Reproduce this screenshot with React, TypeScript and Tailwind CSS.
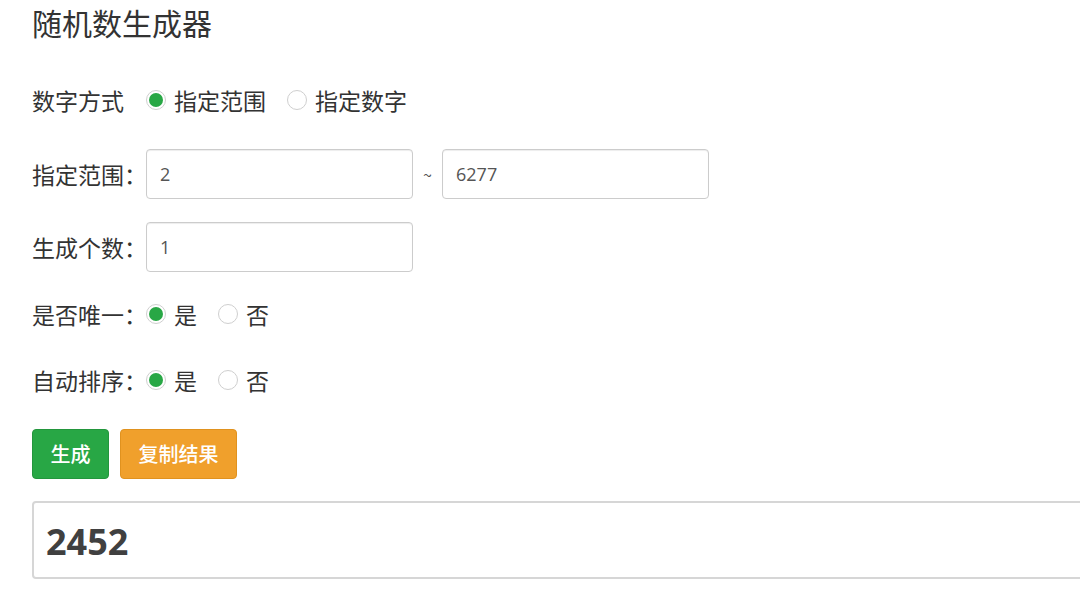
import React, { useState } from "react";

const font = { fontFamily: '"Noto Sans CJK SC", "Noto Sans", sans-serif' };

function Radio({ checked, label, onClick }: { checked: boolean; label: string; onClick: () => void }) {
  return (
    <label className="flex items-center cursor-pointer whitespace-nowrap" onClick={onClick}>
      <span className="w-[20px] h-[20px] shrink-0 rounded-full border border-[#cfcfcf] bg-white flex items-center justify-center">
        {checked && <span className="w-[14px] h-[14px] rounded-full bg-[#28a745]" />}
      </span>
      <span className="ml-[8px]">{label}</span>
    </label>
  );
}

function Label({ children }: { children: React.ReactNode }) {
  return <span className="w-[114px] shrink-0 whitespace-nowrap">{children}</span>;
}

export default function App() {
  const [mode, setMode] = useState("range");
  const [unique, setUnique] = useState(true);
  const [sorted, setSorted] = useState(true);
  const [min, setMin] = useState("2");
  const [max, setMax] = useState("6277");
  const [count, setCount] = useState("1");
  const [result, setResult] = useState("2452");

  const generate = () => {
    const lo = parseInt(min) || 0;
    const hi = parseInt(max) || 0;
    const n = parseInt(count) || 1;
    const out: number[] = [];
    for (let i = 0; i < n; i++) out.push(lo + Math.floor(Math.random() * (hi - lo + 1)));
    if (sorted) out.sort((a, b) => a - b);
    setResult(out.join(", "));
  };

  const inputCls =
    "w-[267px] h-[50px] shrink-0 rounded-[4px] border border-[#cccccc] px-[13px] text-[18px] text-[#555] outline-none shadow-[inset_0_1px_1px_rgba(0,0,0,0.075)]";

  return (
    <div className="bg-white min-h-[595px] w-[1080px] overflow-hidden text-[#333] text-[23px]" style={font}>
      <div className="pl-[32px] pt-[4px]">
        <h1 className="text-[30px] leading-[36px] font-normal whitespace-nowrap">随机数生成器</h1>

        <div className="flex items-center h-[40px] mt-[40px]">
          <Label>数字方式</Label>
          <Radio checked={mode === "range"} label="指定范围" onClick={() => setMode("range")} />
          <span className="w-[21px]" />
          <Radio checked={mode === "number"} label="指定数字" onClick={() => setMode("number")} />
        </div>

        <div className="flex items-center mt-[29px]">
          <Label>指定范围：</Label>
          <input className={inputCls} value={min} onChange={(e) => setMin(e.target.value)} style={{ fontFamily: '"Open Sans", sans-serif' }} />
          <span className="w-[29px] text-center text-[16px] text-[#555]">~</span>
          <input className={inputCls} value={max} onChange={(e) => setMax(e.target.value)} style={{ fontFamily: '"Open Sans", sans-serif' }} />
        </div>

        <div className="flex items-center mt-[23px]">
          <Label>生成个数：</Label>
          <input className={inputCls} value={count} onChange={(e) => setCount(e.target.value)} style={{ fontFamily: '"Open Sans", sans-serif' }} />
        </div>

        <div className="flex items-center h-[40px] mt-[22px]">
          <Label>是否唯一：</Label>
          <Radio checked={unique} label="是" onClick={() => setUnique(true)} />
          <span className="w-[21px]" />
          <Radio checked={!unique} label="否" onClick={() => setUnique(false)} />
        </div>

        <div className="flex items-center h-[40px] mt-[26px]">
          <Label>自动排序：</Label>
          <Radio checked={sorted} label="是" onClick={() => setSorted(true)} />
          <span className="w-[21px]" />
          <Radio checked={!sorted} label="否" onClick={() => setSorted(false)} />
        </div>

        <div className="flex gap-[11px] mt-[29px]">
          <button
            onClick={generate}
            className="w-[77px] h-[50px] rounded-[4px] bg-[#28a745] border border-[#23963d] text-white text-[20px] font-medium whitespace-nowrap"
          >
            生成
          </button>
          <button
            onClick={() => navigator.clipboard?.writeText(result)}
            className="w-[117px] h-[50px] rounded-[4px] bg-[#f0a02c] border border-[#e0921f] text-white text-[20px] font-medium whitespace-nowrap"
          >
            复制结果
          </button>
        </div>

        <div className="mt-[22px] w-[1100px] h-[78px] rounded-[4px] border-2 border-[#d6d6d6] flex items-center px-[12px] pt-[3px]">
          <span className="text-[36px] leading-[44px] font-bold text-[#404040]" style={{ fontFamily: '"Open Sans", sans-serif' }}>
            {result}
          </span>
        </div>
      </div>
    </div>
  );
}
